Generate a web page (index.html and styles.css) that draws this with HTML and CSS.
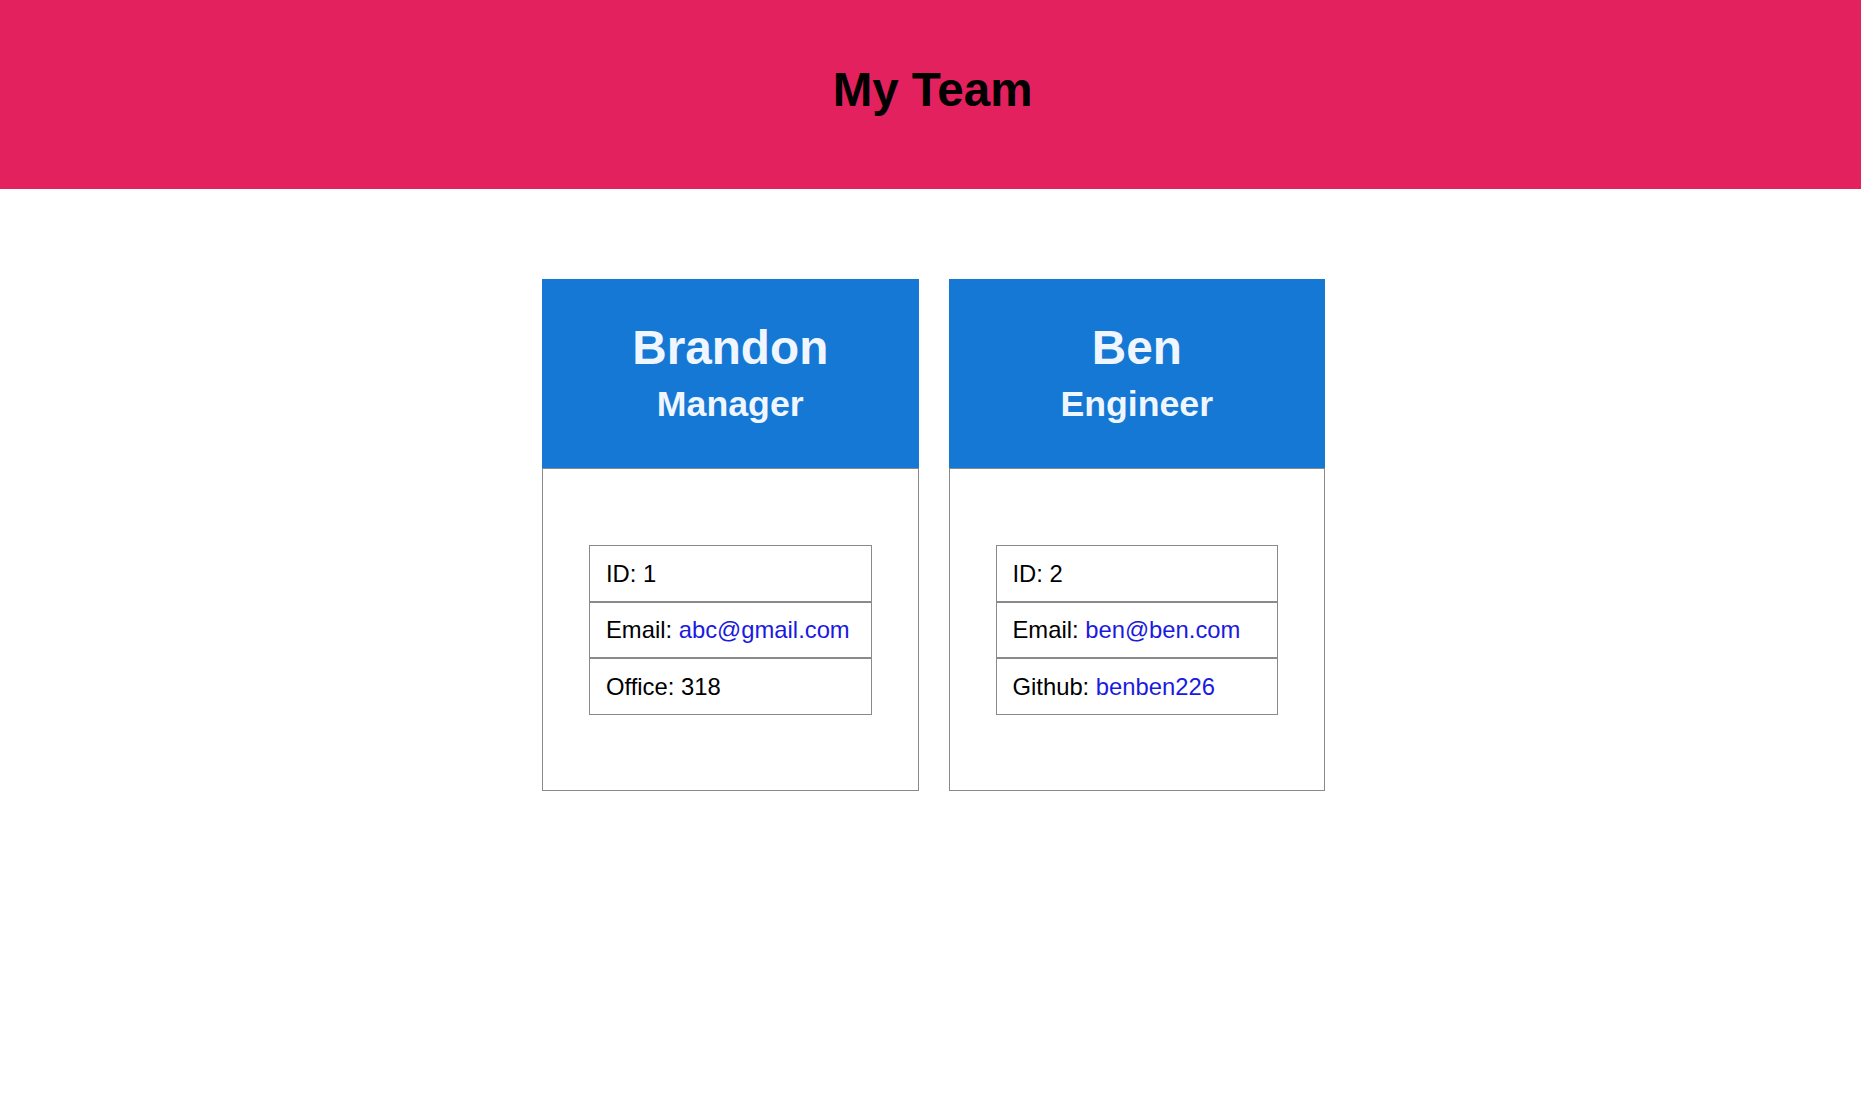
FILE: index.html
```html
<!DOCTYPE html>
<html lang="en">
<head>
<meta charset="utf-8">
<title>My Team</title>
<link rel="stylesheet" href="styles.css">
</head>
<body>
<header class="banner">
  <h1 class="banner-title">My Team</h1>
</header>
<main class="team">
  <section class="card">
    <div class="card-head">
      <h2 class="card-name">Brandon</h2>
      <h3 class="card-role">Manager</h3>
    </div>
    <div class="card-body">
      <ul class="info">
        <li class="info-row">ID: 1</li>
        <li class="info-row">Email: <a class="info-link" href="#">abc@gmail.com</a></li>
        <li class="info-row">Office: 318</li>
      </ul>
    </div>
  </section>
  <section class="card">
    <div class="card-head">
      <h2 class="card-name">Ben</h2>
      <h3 class="card-role">Engineer</h3>
    </div>
    <div class="card-body">
      <ul class="info">
        <li class="info-row">ID: 2</li>
        <li class="info-row">Email: <a class="info-link" href="#">ben@ben.com</a></li>
        <li class="info-row">Github: <a class="info-link" href="#">benben226</a></li>
      </ul>
    </div>
  </section>
</main>
</body>
</html>
```
FILE: styles.css
```css
* { box-sizing: border-box; }
html, body { margin: 0; padding: 0; background: #ffffff; }
body { font-family: "Liberation Sans", Arial, sans-serif; color: #000; }

.banner {
  background: #e3215f;
  height: 189px;
  padding-top: 60px;
  text-align: center;
}
.banner-title {
  margin: 0 0 0 4px;
  font-size: 47.5px;
  line-height: 60px;
  font-weight: bold;
  color: #000;
}

.team {
  display: flex;
  justify-content: center;
  gap: 30px;
  margin-top: 90px;
  padding-left: 6px;
}

.card {
  width: 376.5px;
  display: flex;
  flex-direction: column;
}
.card-head {
  background: #1478d4;
  height: 189px;
  padding-top: 41px;
  text-align: center;
  color: #f0f6ff;
}
.card-name {
  margin: 0;
  font-size: 47.7px;
  line-height: 56px;
  font-weight: bold;
}
.card-role {
  margin: 6px 0 0;
  font-size: 35.7px;
  line-height: 44px;
  font-weight: bold;
}

.card-body {
  border: 1px solid #8a8a8a;
  padding: 76px 46px 75px;
}
.info {
  list-style: none;
  margin: 0;
  padding: 0;
}
.info-row {
  border: 1px solid #8a8a8a;
  padding: 13.5px 16px 13px;
  font-size: 23.8px;
  line-height: 28px;
}
.info-link {
  color: #1a1ae0;
  text-decoration: none;
}
```
